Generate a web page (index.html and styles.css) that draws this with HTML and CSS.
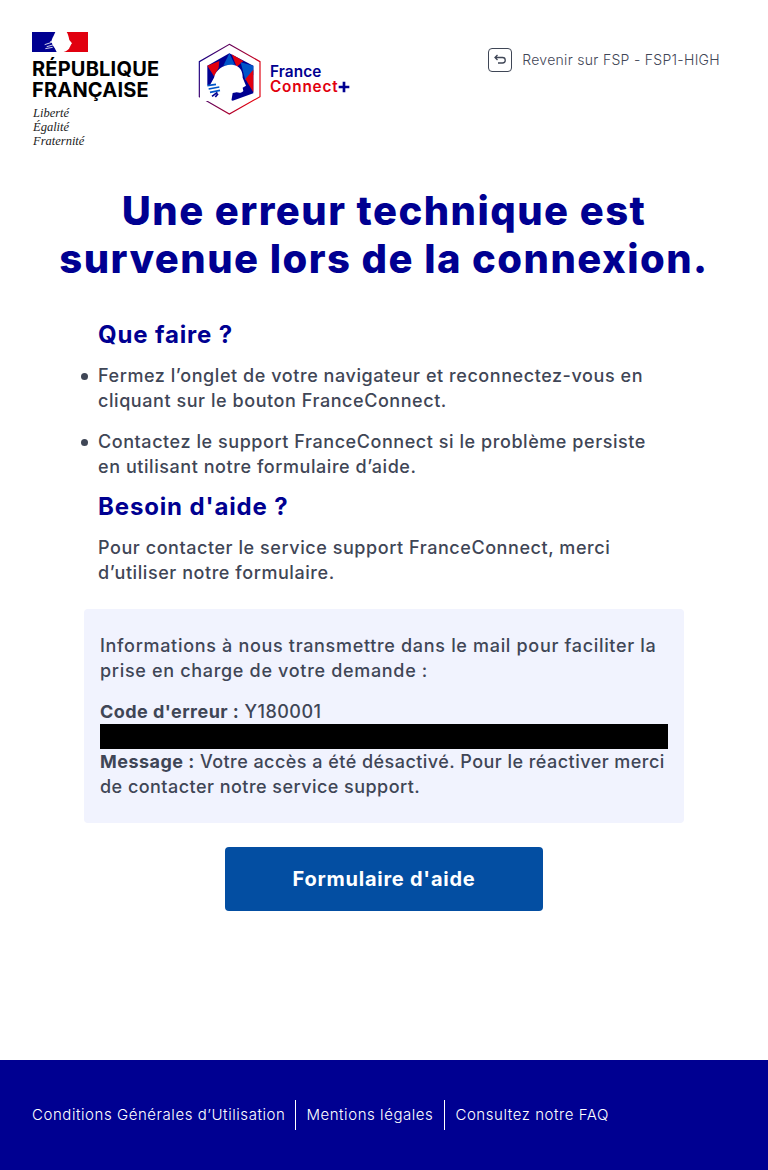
FILE: index.html
```html
<!DOCTYPE html>
<html lang="fr">
<head>
<meta charset="utf-8">
<title>FranceConnect+</title>
<link rel="stylesheet" href="styles.css">
</head>
<body>
<div class="page">
  <header class="header">
    <div class="logos">
      <div class="rf">
        <svg class="flag" width="56" height="20" viewBox="0 0 168 60" aria-hidden="true">
          <rect width="168" height="60" fill="#fff"/>
          <path d="M0 0H70C66 10 62 16 60 22 56 30 62 40 68 48L74 60H0Z" fill="#000091"/>
          <path d="M104 0H168V60H95C104 58 112 52 113 46 116 42 116 38 120 34L112 24C110 14 108 6 104 0Z" fill="#e1000f"/>
          <path d="M38 38 62 30M44 44 66 38M40 50 62 46M54 30 64 26" stroke="#fff" stroke-width="2.500" fill="none"/>
        </svg>
        <div class="rf-name">RÉPUBLIQUE<br>FRANÇAISE</div>
        <div class="rf-motto">Liberté<br>Égalité<br>Fraternité</div>
      </div>
      <svg class="fc" width="170" height="90" viewBox="0 0 510 270" aria-label="FranceConnect+">
        <defs>
          <linearGradient id="hexline" x1="0" y1="0" x2="1" y2="0.4">
            <stop offset="0" stop-color="#000091"/>
            <stop offset="1" stop-color="#e1000f"/>
          </linearGradient>
        </defs>
        <path d="M118 28 210 80V185L118 237 28 185V80Z" fill="#fff" stroke="url(#hexline)" stroke-width="3.500"/>
        <path d="M118 55 190 92V175L128 197 52 165V92Z" fill="#000091"/>
        <path d="M118 55 100 92 136 92Z" fill="#0055c8"/>
        <path d="M52 92 88 78 86 98 72 124Z" fill="#e1000f"/>
        <path d="M125 58 160 78 140 96Z" fill="#e1000f"/>
        <path d="M152 82 190 92V120L166 136Z" fill="#0055c8"/>
        <path d="M190 104 166 132 190 172Z" fill="#e1000f"/>
        <path d="M72 128C78 102 105 86 130 90 150 93 158 108 158 128L168 152 158 158 160 168C156 174 148 174 140 172L128 174 124 198H30V150H60Z" fill="#fff"/>
        <path d="M52 152 78 148M56 162 88 156M60 172 90 166" stroke="#0055c8" stroke-width="5" fill="none"/>
        <path d="M66 184 82 172M76 186 84 176" stroke="#000091" stroke-width="5" fill="none"/>
        <text class="fc-france" x="240" y="127">France</text>
        <text class="fc-connect" x="240" y="170">Connect</text>
        <path d="M446 156H478M462 140V172" stroke="#000091" stroke-width="8"/>
      </svg>
    </div>
    <a class="back" href="#">
      <span class="back-icon">
        <svg width="14" height="14" viewBox="0 0 14 14" aria-hidden="true">
          <path d="M4.500 2 2 4.500 4.500 7M2 4.500H9.500A2.700 2.700 0 0 1 9.500 10H5" fill="none" stroke="#3f4656" stroke-width="1.300"/>
        </svg>
      </span>
      <span>Revenir sur FSP - FSP1-HIGH</span>
    </a>
  </header>

  <main class="main">
    <h1 class="title">Une erreur technique est<br>survenue lors de la connexion.</h1>

    <section class="content">
      <h2 class="sub">Que faire ?</h2>
      <ul class="steps">
        <li class="step"><span class="dot"></span><span>Fermez l’onglet de votre navigateur et reconnectez-vous en<br>cliquant sur le bouton FranceConnect.</span></li>
        <li class="step"><span class="dot"></span><span>Contactez le support FranceConnect si le problème persiste<br>en utilisant notre formulaire d’aide.</span></li>
      </ul>
      <h2 class="sub sub-help">Besoin d'aide ?</h2>
      <p class="help">Pour contacter le service support FranceConnect, merci<br>d’utiliser notre formulaire.</p>
    </section>

    <section class="info">
      <p class="info-intro">Informations à nous transmettre dans le mail pour faciliter la<br>prise en charge de votre demande :</p>
      <p class="info-line"><strong>Code d'erreur :</strong> Y180001</p>
      <div class="redacted"></div>
      <p class="info-line"><strong>Message :</strong> Votre accès a été désactivé. Pour le réactiver merci<br>de contacter notre service support.</p>
    </section>

    <a class="cta" href="#">Formulaire d'aide</a>
  </main>

  <footer class="footer">
    <a class="foot-link" href="#">Conditions Générales d’Utilisation</a>
    <a class="foot-link" href="#">Mentions légales</a>
    <a class="foot-link" href="#">Consultez notre FAQ</a>
  </footer>
</div>
</body>
</html>
```
FILE: styles.css
```css
* { box-sizing: border-box; }
html, body { margin: 0; padding: 0; }
body {
  font-family: Inter, "Liberation Sans", sans-serif;
  color: #3f4656;
  background: #fff;
}
a { color: inherit; text-decoration: none; }
.page {
  min-height: 1170px;
  display: flex;
  flex-direction: column;
}
.header {
  display: flex;
  justify-content: space-between;
  align-items: flex-start;
  height: 187px;
  padding: 32px 48px 0 32px;
}
.logos { display: flex; align-items: flex-start; }
.rf { width: 160px; }
.flag { display: block; }
.rf-name {
  margin-top: 7px;
  font-size: 20px;
  line-height: 21px;
  font-weight: 700;
  color: #000;
  white-space: nowrap;
  letter-spacing: 0.2px;
}
.rf-motto {
  margin-top: 5px;
  padding-left: 1px;
  font-family: "Liberation Serif", serif;
  font-style: italic;
  font-size: 12.500px;
  line-height: 14px;
  color: #222;
}
.fc { display: block; margin: 3px 0 0 -2px; }
.fc-france { font-family: Inter, sans-serif; font-size: 46px; font-weight: 600; letter-spacing: 0.3px; fill: #000091; }
.fc-connect { font-family: Inter, sans-serif; font-size: 46px; font-weight: 600; letter-spacing: 2.400px; fill: #e1000f; }
.back {
  display: flex;
  align-items: center;
  gap: 10px;
  margin-top: 16px;
  font-size: 14px;
  font-weight: 300;
  line-height: 24px;
  letter-spacing: 0.3px;
  white-space: nowrap;
}
.back-icon {
  display: flex;
  align-items: center;
  justify-content: center;
  width: 24px;
  height: 24px;
  border: 1px solid #3f4656;
  border-radius: 4px;
}
.main {
  display: flex;
  flex-direction: column;
  align-items: center;
}
.title {
  margin: 0;
  font-size: 40px;
  line-height: 48px;
  font-weight: 850;
  text-align: center;
  color: #000091;
  white-space: nowrap;
  letter-spacing: 1.450px;
}
.content {
  align-self: flex-start;
  margin-top: 37px;
  padding-left: 81px;
  font-size: 18px;
  font-weight: 450;
  line-height: 25px;
  letter-spacing: 0.56px;
  white-space: nowrap;
}
.sub {
  margin: 0 0 13px 17px;
  font-size: 24px;
  line-height: 30px;
  font-weight: 700;
  letter-spacing: 0.85px;
  color: #000091;
}
.sub-help { margin-top: 13px; }
.steps {
  list-style: none;
  margin: 0;
  padding: 0;
  display: flex;
  flex-direction: column;
  gap: 16px;
}
.step { display: flex; gap: 10px; align-items: flex-start; }
.dot {
  flex: none;
  width: 7px;
  height: 7px;
  margin-top: 10px;
  border-radius: 50%;
  background: #3f4656;
}
.help { margin: 0 0 0 17px; }
.info {
  width: 600px;
  margin-top: 24px;
  padding: 24px 16px;
  background: #f1f3fe;
  border-radius: 4px;
  font-size: 18px;
  font-weight: 450;
  line-height: 25px;
  white-space: nowrap;
}
.info p { margin: 0; }
.info .info-intro { margin-bottom: 16px; letter-spacing: 0.68px; }
.info-line { letter-spacing: 0.46px; }
.info-line strong { font-weight: 700; }
.redacted { height: 25px; background: #000; }
.cta {
  display: flex;
  align-items: center;
  justify-content: center;
  width: 318px;
  height: 64px;
  margin-top: 24px;
  background: #034ea2;
  border-radius: 4px;
  color: #fff;
  font-size: 20px;
  font-weight: 700;
  letter-spacing: 0.75px;
}
.footer {
  margin-top: auto;
  height: 110px;
  display: flex;
  align-items: center;
  padding-left: 32px;
  background: #000091;
  color: #fff;
  font-size: 15px;
  font-weight: 300;
  letter-spacing: 0.56px;
  line-height: 28px;
  white-space: nowrap;
}
.foot-link {
  display: flex;
  align-items: center;
  height: 30px;
  padding: 0 11px 0 10px;
  border-right: 1px solid #fff;
}
.foot-link:first-child { padding: 0 10px 0 0; }
.foot-link:last-child { border-right: 0; }
```
